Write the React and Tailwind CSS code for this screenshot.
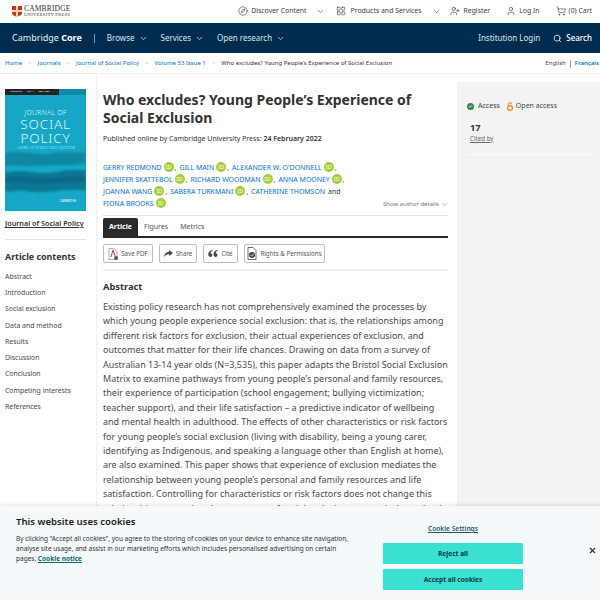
import { ChevronDown, Compass, LayoutGrid, UserPlus, User, ShoppingCart, Search, X, Check } from "lucide-react";

const authors = [
  [["GERRY REDMOND", ",", true], ["GILL MAIN", ",", true], ["ALEXANDER W. O'DONNELL", ",", true]],
  [["JENNIFER SKATTEBOL", ",", true], ["RICHARD WOODMAN", ",", true], ["ANNA MOONEY", ",", true]],
  [["JOANNA WANG", ",", true], ["SABERA TURKMANI", ",", true], ["CATHERINE THOMSON", null, false]],
  [["FIONA BROOKS", null, true]],
];

const contents = ["Abstract", "Introduction", "Social exclusion", "Data and method", "Results", "Discussion", "Conclusion", "Competing interests", "References"];

const abstractLines = [
  "Existing policy research has not comprehensively examined the processes by",
  "which young people experience social exclusion: that is, the relationships among",
  "different risk factors for exclusion, their actual experiences of exclusion, and",
  "outcomes that matter for their life chances. Drawing on data from a survey of",
  "Australian 13-14 year olds (N=3,535), this paper adapts the Bristol Social Exclusion",
  "Matrix to examine pathways from young people’s personal and family resources,",
  "their experience of participation (school engagement; bullying victimization;",
  "teacher support), and their life satisfaction – a predictive indicator of wellbeing",
  "and mental health in adulthood. The effects of other characteristics or risk factors",
  "for young people’s social exclusion (living with disability, being a young carer,",
  "identifying as Indigenous, and speaking a language other than English at home),",
  "are also examined. This paper shows that experience of exclusion mediates the",
  "relationship between young people’s personal and family resources and life",
  "satisfaction. Controlling for characteristics or risk factors does not change this",
  "relationship, suggesting that processes of social exclusion operate independently",
];

const OrcidBadge = () => (
  <span className="inline-flex items-center justify-center w-[10px] h-[10px] rounded-full bg-[#a6ce39] text-white text-[5.5px] leading-none mx-[2px] align-[1.5px]">
    ID
  </span>
);

const TopLink = ({ icon: Icon, label, chevron, className }) => (
  <div className={`flex items-center gap-[3px] text-[#3d3d3d] text-[6.9px] ${className}`}>
    <Icon size={10} strokeWidth={1.5} />
    <span>{label}</span>
    {chevron && <ChevronDown size={9} strokeWidth={1.6} className="ml-[6px]" />}
  </div>
);

const Crumb = ({ children }) => (
  <>
    <span className="text-[#0072cf]">{children}</span>
    <span className="text-[#b9b9b9] w-[15.5px] text-center">&gt;</span>
  </>
);

const ToolButton = ({ icon, label, width }) => (
  <button className={`flex items-center justify-center gap-[3px] h-[19px] border border-[#bdbdbd] rounded-[2px] text-[#555] text-[6.2px] ${width}`}>
    {icon}
    {label}
  </button>
);

const JournalCover = () => (
  <div className="w-[81px] h-[122px] bg-[#16a7c6] flex flex-col overflow-hidden relative">
    <div className="h-[6px] bg-[#0f8aa6] shrink-0">
      <div className="h-full w-[54px] bg-[#222] flex items-center gap-[5px] px-[5px] text-white text-[2.4px]">
        <span>Volume 53</span><span>Part 1</span><span>2024 ISSN</span>
      </div>
    </div>
    <div className="text-[#dff6fb] text-center font-light mt-[14.5px] leading-none">
      <div className="text-[6.8px] tracking-[0.3px]">JOURNAL OF</div>
      <div className="text-[13.5px] mt-[2px] tracking-[0.8px]">SOCIAL</div>
      <div className="text-[13.5px] tracking-[0.8px]">POLICY</div>
      <div className="text-[2.6px] mt-[2px]">A JOURNAL OF THE SOCIAL POLICY ASSOCIATION</div>
    </div>
    <svg className="absolute left-0 top-[60px] blur-[1px]" width="81" height="52" viewBox="0 0 81 52">
      <path d="M0 4C15 0 30 8 50 4C62 2 72 5 81 3V14C62 18 46 15 28 17C16 18 8 15 0 17Z" fill="#0f87a3" />
      <path d="M0 24C18 18 34 28 56 22C66 20 74 22 81 21V42C62 38 40 46 22 42C12 40 6 44 0 42Z" fill="#0c7893" />
      <path d="M0 28C18 26 34 32 56 28C66 26 74 28 81 28V33C62 32 40 36 22 34C12 33 6 34 0 34Z" fill="#0a6a85" />
    </svg>
    <div className="absolute right-[10px] bottom-[8px] text-white text-[2.8px] leading-none">CAMBRIDGE</div>
  </div>
);

export default function App() {
  return (
    <div className="relative w-[600px] h-[600px] overflow-hidden bg-white font-['Noto_Sans',sans-serif]">
      {/* top strip */}
      <div className="h-[23px] flex items-center justify-between pl-[12px] pr-[8px]">
        <div className="flex items-center gap-[2px]">
          <svg width="10" height="11" viewBox="0 0 10 11">
            <path d="M0 0H10V7C10 9 7 10 5 11C3 10 0 9 0 7Z" fill="#b5382a" />
            <path d="M4 0H6V11H4ZM0 4H10V6H0Z" fill="#e8d8a8" />
          </svg>
          <div className="font-['Liberation_Serif',serif] text-[#333] leading-none">
            <div className="text-[7.6px] tracking-[0.1px]">CAMBRIDGE</div>
            <div className="text-[4.6px] tracking-[0.25px]">UNIVERSITY PRESS</div>
          </div>
        </div>
        <div className="flex items-center">
          <TopLink icon={Compass} label="Discover Content" chevron />
          <TopLink icon={LayoutGrid} label="Products and Services" chevron className="gap-[5px] ml-[11px]" />
          <TopLink icon={UserPlus} label="Register" className="ml-[9px]" />
          <TopLink icon={User} label="Log In" className="ml-[16px]" />
          <TopLink icon={ShoppingCart} label="(0) Cart" className="ml-[16px]" />
        </div>
      </div>

      {/* main nav */}
      <nav className="h-[30px] bg-[#002d4f] flex items-center justify-between pl-[12px] pr-[8px] text-[#d6e8f2] text-[8px]">
        <div className="flex items-center">
          <span className="text-[9px] text-[#e6f0f6]">Cambridge <b className="text-white">Core</b></span>
          <span className="w-px h-[9px] bg-[#7f9bb0] mx-[12px]" />
          <div className="flex items-center gap-[13px]">
            <span className="flex items-center gap-[4px]">Browse <ChevronDown size={9} /></span>
            <span className="flex items-center gap-[4px]">Services <ChevronDown size={9} /></span>
            <span className="flex items-center gap-[4px]">Open research <ChevronDown size={9} /></span>
          </div>
        </div>
        <div className="flex items-center gap-[13px]">
          <span>Institution Login</span>
          <span className="flex items-center gap-[4px] font-medium text-white"><Search size={9} />Search</span>
        </div>
      </nav>

      {/* breadcrumb */}
      <div className="h-[21px] flex items-center justify-between pl-[5px] pr-[1px] pt-[1px] text-[6px] border-b border-[#eeeeee]">
        <div className="flex items-center text-[#333]">
          <Crumb>Home</Crumb>
          <Crumb>Journals</Crumb>
          <Crumb>Journal of Social Policy</Crumb>
          <Crumb>Volume 53 Issue 1</Crumb>
          <span>Who excludes? Young People’s Experience of Social Exclusion</span>
        </div>
        <div className="flex items-center">
          <span className="text-[#444]">English</span>
          <span className="w-px h-[8px] bg-[#999] mx-[4px]" />
          <span className="text-[#0072cf] font-semibold">Français</span>
        </div>
      </div>

      <div className="flex h-[526px]">
        {/* left column */}
        <aside className="w-[96px] shrink-0 pl-[5px] pt-[15px] pr-[10px] shadow-[1px_0_2px_rgba(0,0,0,0.08)]">
          <JournalCover />
          <div className="mt-[7px] text-[7.2px] font-semibold text-[#333] underline whitespace-nowrap">Journal of Social Policy</div>
          <div className="h-px bg-[#e4e4e4] mt-[10px]" />
          <h3 className="text-[8.9px] font-bold text-[#333] mt-[10px] leading-[13px]">Article contents</h3>
          <ul className="mt-[6px] text-[6.9px] text-[#4a4a4a] leading-[16.25px]">
            {contents.map((c) => <li key={c}>{c}</li>)}
          </ul>
        </aside>

        {/* article */}
        <main className="w-[361px] shrink-0 pl-[7px] pr-[9px] pt-[17px]">
          <h1 className="text-[14px] font-bold leading-[18px] text-[#333]">Who excludes? Young People’s Experience of Social Exclusion</h1>
          <p className="text-[7px] text-[#333] mt-[7px] leading-[10px]">Published online by Cambridge University Press: <span className="font-semibold">24 February 2022</span></p>

          <div className="relative mt-[18px] text-[6.95px] leading-[12px] text-[#0072cf]">
            {authors.map((row, i) => (
              <div key={i} className="h-[12px]">
                {row.map(([name, sep, orcid]) => (
                  <span key={name} className="mr-[3px]">
                    {name}{orcid && <OrcidBadge />}{sep && <span className="text-[#333] -ml-px">{sep}</span>}
                  </span>
                ))}
                {i === 2 && <span className="text-[#333]">and</span>}
              </div>
            ))}
            <div className="absolute right-0 bottom-0 flex items-center gap-[2px] text-[6px] text-[#777]">
              Show author details <ChevronDown size={7} />
            </div>
          </div>

          <div className="h-px bg-[#e4e4e4] mt-[5px]" />
          <div className="flex items-end border-b-2 border-[#2a2a2a] mt-[2px] h-[20px] text-[7px] text-[#555] box-border">
            <span className="h-full w-[35px] bg-[#2a2a2a] text-white font-bold flex items-center justify-center rounded-t-[2px]">Article</span>
            <span className="h-full flex items-center ml-[6px]">Figures</span>
            <span className="h-full flex items-center ml-[12px]">Metrics</span>
          </div>
          <div className="flex gap-[6px] mt-[6px]">
            <ToolButton width="w-[50px]" label="Save PDF" icon={<svg width="10" height="12" viewBox="0 0 10 12"><path d="M1 .5H6L9 3.5V11.5H1Z" fill="#fff" stroke="#999" strokeWidth=".8" /><path d="M3 9L5 2L7 8" fill="none" stroke="#d33" strokeWidth="1" /><circle cx="8" cy="10" r="2" fill="#555" /></svg>} />
            <ToolButton width="w-[38px]" label="Share" icon={<svg width="9" height="7" viewBox="0 0 9 7"><path d="M5 0L9 3L5 6V4.2C3 4.2 1.5 5 0 7C.5 4 2 2 5 1.8Z" fill="#444" /></svg>} />
            <ToolButton width="w-[35px]" label="Cite" icon={<svg width="10" height="7" viewBox="0 0 10 7"><path d="M4.3 0C2 .5 .3 2 .3 4.5C.3 6 1.2 7 2.4 7C3.5 7 4.3 6.1 4.3 5C4.3 3.9 3.5 3.2 2.5 3.2C2.6 2.2 3.3 1.4 4.3 1ZM9.5 0C7.2 .5 5.5 2 5.5 4.5C5.5 6 6.4 7 7.6 7C8.7 7 9.5 6.1 9.5 5C9.5 3.9 8.7 3.2 7.7 3.2C7.8 2.2 8.5 1.4 9.5 1Z" fill="#444" /></svg>} />
            <ToolButton width="w-[81px]" label="Rights & Permissions" icon={<svg width="10" height="13" viewBox="0 0 10 13"><path d="M1 .5H6L9 3.5V12.5H1Z" fill="#fff" stroke="#444" strokeWidth=".8" /><circle cx="5" cy="8" r="3" fill="#444" /><path d="M3.5 8L4.7 9.2L6.6 6.9" fill="none" stroke="#fff" strokeWidth=".8" /></svg>} />
          </div>
          <div className="h-[2px] bg-[#f0f0f0] mt-[6px]" />
          <h2 className="text-[9.3px] font-bold text-[#333] mt-[9px] leading-[13px]">Abstract</h2>
          <div className="mt-[7px] text-[9px] leading-[14.4px] text-[#4a4a4a] whitespace-nowrap">
            {abstractLines.map((l, i) => <div key={i}>{l}</div>)}
          </div>
        </main>

        {/* right column */}
        <aside className="flex-1 bg-[#f3f3f3] mt-[8px] pl-[10px] pt-[19px]">
          <div className="flex items-center text-[7px] text-[#444]">
            <span className="w-[7px] h-[7px] rounded-full bg-[#2e8b46] flex items-center justify-center mr-[4px]"><Check size={5} strokeWidth={4} className="text-white" /></span>
            Access
            <svg className="ml-[7px] mr-[3px]" width="6" height="9" viewBox="0 0 6 9">
              <path d="M1.3 3.5V2.2a1.7 1.7 0 0 1 3.4 0" fill="none" stroke="#f68212" strokeWidth="1" />
              <circle cx="3" cy="6" r="2.4" fill="none" stroke="#f68212" strokeWidth="1.2" />
            </svg>
            Open access
          </div>
          <div className="mt-[9px] text-[9.3px] font-bold text-[#333] leading-[13px] ml-[3px]">17</div>
          <div className="text-[6.2px] text-[#666] underline ml-[3px] leading-[10px]">Cited by</div>
          <div className="h-px bg-white mt-[10px] mr-[8px]" />
        </aside>
      </div>

      {/* cookie banner */}
      <div className="absolute left-0 right-0 bottom-0 h-[94px] bg-[#f4f9fb] shadow-[0_-1px_4px_rgba(0,0,0,0.12)] flex">
        <div className="w-[360px] shrink-0 pl-[16px] pt-[9px]">
          <h4 className="text-[9.6px] font-semibold text-[#1a1a1a] leading-[14px]">This website uses cookies</h4>
          <p className="text-[6.5px] leading-[10px] text-[#333] mt-[5px] w-[340px]">
            By clicking "Accept all cookies", you agree to the storing of cookies on your device to enhance site navigation, analyse site usage, and assist in our marketing efforts which includes personalised advertising on certain pages. <a className="font-bold text-[#0a6b6b] underline">Cookie notice</a>
          </p>
        </div>
        <div className="w-[140px] ml-[23px] shrink-0 pt-[18px] flex flex-col items-center">
          <span className="text-[6.6px] font-semibold text-[#1c5a6b] underline leading-[10px]">Cookie Settings</span>
          <button className="w-[140px] h-[21px] mt-[9px] bg-[#3ae0d2] rounded-[1px] text-[6.6px] font-bold text-[#0c3b4a]">Reject all</button>
          <button className="w-[140px] h-[21px] mt-[5px] bg-[#3ae0d2] rounded-[1px] text-[6.6px] font-bold text-[#0c3b4a]">Accept all cookies</button>
        </div>
        <div className="flex-1 flex justify-end pr-[3px] pt-[40px]">
          <X size={9} strokeWidth={3} className="text-[#333]" />
        </div>
      </div>
    </div>
  );
}
